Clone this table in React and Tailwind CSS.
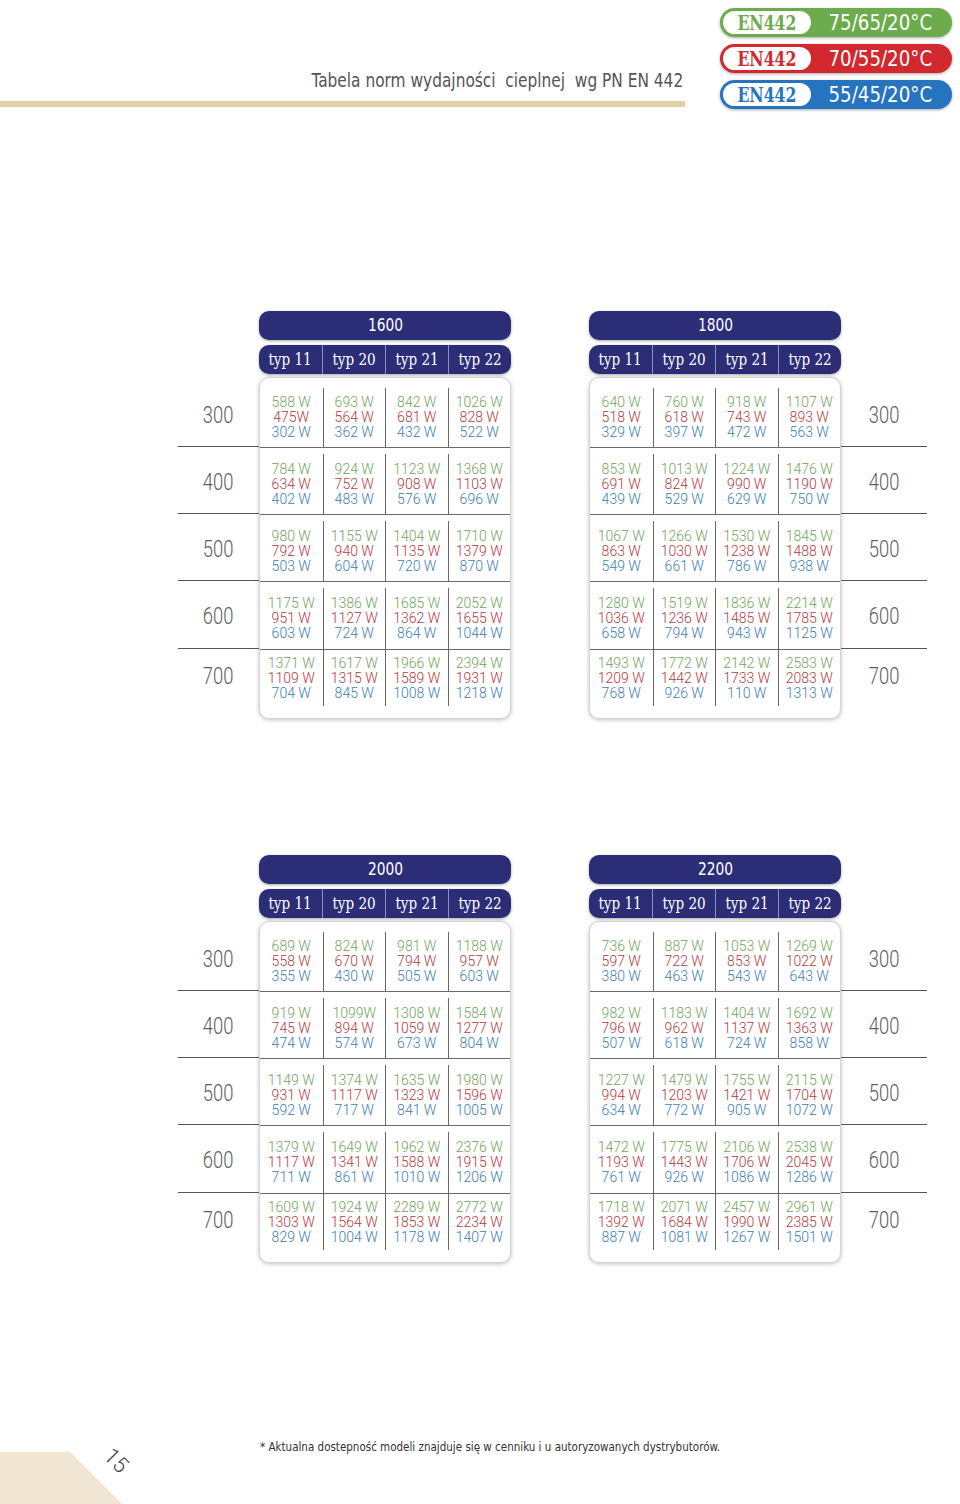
import React from 'react';

const narrow = { fontFamily: '"Liberation Sans Narrow", "DejaVu Sans Condensed", "Liberation Sans", sans-serif' };
const slab = { fontFamily: '"DejaVu Serif Condensed", "DejaVu Serif", serif' };
const thin = { fontFamily: 'Roboto, "Liberation Sans", sans-serif' };

const w = (v) => (typeof v === 'number' ? `${v} W` : v);

const t1600 = [
  [[588, '475W', 302], [693, 564, 362], [842, 681, 432], [1026, 828, 522]],
  [[784, 634, 402], [924, 752, 483], [1123, 908, 576], [1368, 1103, 696]],
  [[980, 792, 503], [1155, 940, 604], [1404, 1135, 720], [1710, 1379, 870]],
  [[1175, 951, 603], [1386, 1127, 724], [1685, 1362, 864], [2052, 1655, 1044]],
  [[1371, 1109, 704], [1617, 1315, 845], [1966, 1589, 1008], [2394, 1931, 1218]],
];
const t1800 = [
  [[640, 518, 329], [760, 618, 397], [918, 743, 472], [1107, 893, 563]],
  [[853, 691, 439], [1013, 824, 529], [1224, 990, 629], [1476, 1190, 750]],
  [[1067, 863, 549], [1266, 1030, 661], [1530, 1238, 786], [1845, 1488, 938]],
  [[1280, 1036, 658], [1519, 1236, 794], [1836, 1485, 943], [2214, 1785, 1125]],
  [[1493, 1209, 768], [1772, 1442, 926], [2142, 1733, 110], [2583, 2083, 1313]],
];
const t2000 = [
  [[689, 558, 355], [824, 670, 430], [981, 794, 505], [1188, 957, 603]],
  [[919, 745, 474], ['1099W', 894, 574], [1308, 1059, 673], [1584, 1277, 804]],
  [[1149, 931, 592], [1374, 1117, 717], [1635, 1323, 841], [1980, 1596, 1005]],
  [[1379, 1117, 711], [1649, 1341, 861], [1962, 1588, 1010], [2376, 1915, 1206]],
  [[1609, 1303, 829], [1924, 1564, 1004], [2289, 1853, 1178], [2772, 2234, 1407]],
];
const t2200 = [
  [[736, 597, 380], [887, 722, 463], [1053, 853, 543], [1269, 1022, 643]],
  [[982, 796, 507], [1183, 962, 618], [1404, 1137, 724], [1692, 1363, 858]],
  [[1227, 994, 634], [1479, 1203, 772], [1755, 1421, 905], [2115, 1704, 1072]],
  [[1472, 1193, 761], [1775, 1443, 926], [2106, 1706, 1086], [2538, 2045, 1286]],
  [[1718, 1392, 887], [2071, 1684, 1081], ['2457  W', 1990, 1267], [2961, 2385, 1501]],
];

const heights = ['300', '400', '500', '600', '700'];
const rowCls = [
  'h-[70px] pt-[10px] border-b',
  'h-[67px] pt-[6px] border-b',
  'h-[67px] pt-[6px] border-b',
  'h-[68px] pt-[6px] border-b',
  'h-[68px] pb-[12px]',
];

const badges = [
  { label: '75/65/20°C', bg: 'bg-[#6cac4c]', text: 'text-[#6cac4c]' },
  { label: '70/55/20°C', bg: 'bg-[#d2282e]', text: 'text-[#d2282e]' },
  { label: '55/45/20°C', bg: 'bg-[#2674c0]', text: 'text-[#2674c0]' },
];

function Labels({ width }) {
  return (
    <div className={`${width} flex flex-col`}>
      <div className="h-[66px]" />
      {heights.map((h, i) => (
        <div
          key={h}
          className={`${rowCls[i]} border-[#555] flex items-center justify-center text-[23px] font-light text-[#5e5e5e]`}
          style={thin}
        >
          <span className="block scale-x-[0.8]">{h}</span>
        </div>
      ))}
    </div>
  );
}

function Table({ title, rows }) {
  return (
    <div className="w-[252px] flex flex-col">
      <div
        className="h-[29px] rounded-[10px] bg-[#2b2d77] text-white text-[17px] flex items-center justify-center shadow-[0_1px_3px_rgba(0,0,0,0.35)]"
        style={narrow}
      >
        <span className="block scale-x-[0.9]">{title}</span>
      </div>
      <div className="mt-[5px] h-[29px] rounded-[10px] bg-[#2b2d77] text-white text-[16px] grid grid-cols-4 shadow-[0_1px_3px_rgba(0,0,0,0.35)]" style={slab}>
        {['typ 11', 'typ 20', 'typ 21', 'typ 22'].map((t, i) => (
          <div key={t} className={`flex items-center justify-center ${i > 0 ? 'border-l border-[#8d8fc2]' : ''}`}>
            <span className="block scale-x-[0.94]">{t}</span>
          </div>
        ))}
      </div>
      <div className="mt-[3px] rounded-[10px] border border-[#d4d4d4] bg-white shadow-[0_1px_4px_rgba(0,0,0,0.25)] overflow-hidden">
        {rows.map((row, r) => (
          <div key={r} className={`${rowCls[r]} border-[#6a6a6a] grid grid-cols-4`}>
            {row.map((cell, c) => (
              <div
                key={c}
                className={`flex flex-col items-center justify-center text-[14px] leading-[15px] font-light ${c > 0 ? 'border-l border-[#6a6a6a]' : ''}`}
                style={thin}
              >
                <span className="text-[#72a55e]">{w(cell[0])}</span>
                <span className="text-[#b83a40]">{w(cell[1])}</span>
                <span className="text-[#3d80b3]">{w(cell[2])}</span>
              </div>
            ))}
          </div>
        ))}
      </div>
    </div>
  );
}

function Section({ left, right, className = '' }) {
  return (
    <section className={`flex pl-[178px] ${className}`}>
      <Labels width="w-[81px]" />
      <Table title={left.title} rows={left.rows} />
      <div className="w-[78px]" />
      <Table title={right.title} rows={right.rows} />
      <Labels width="w-[86px]" />
    </section>
  );
}

export default function App() {
  return (
    <div className="relative w-[960px] h-[1504px] bg-white overflow-hidden">
      <header className="flex h-[311px] items-start">
        <div className="w-[685px] pt-[68px]">
          <div className="text-right pr-[2px] text-[19px] leading-[24px] text-[#555] origin-right scale-x-[0.9]" style={narrow}>
            Tabela norm wydajności&nbsp; cieplnej&nbsp; wg PN EN 442
          </div>
          <div className="mt-[9px] h-[6px] bg-[#e0cfa6]" />
        </div>
        <div className="ml-[35px] pt-[8px] w-[232px] flex flex-col gap-[7px]">
          {badges.map((b) => (
            <div key={b.label} className={`flex h-[29px] rounded-full ${b.bg} p-[3px] shadow-[0_1px_3px_rgba(0,0,0,0.35)]`}>
              <div className={`w-[88px] rounded-full bg-white flex items-center justify-center text-[20px] font-bold ${b.text}`} style={slab}>
                <span className="block scale-x-[0.87]">EN442</span>
              </div>
              <div className="flex-1 flex items-center justify-center text-white text-[22px]" style={narrow}>
                <span className="block scale-x-[0.92]">{b.label}</span>
              </div>
            </div>
          ))}
        </div>
      </header>

      <Section left={{ title: '1600', rows: t1600 }} right={{ title: '1800', rows: t1800 }} />
      <Section className="mt-[136px]" left={{ title: '2000', rows: t2000 }} right={{ title: '2200', rows: t2200 }} />

      <p className="mt-[176px] ml-[260px] text-[13px] leading-[16px] text-[#333] origin-left scale-x-[0.885]" style={narrow}>
        * Aktualna dostepność modeli znajduje się w cenniku i u autoryzowanych dystrybutorów.
      </p>

      <div className="absolute left-0 bottom-0 w-[122px] h-[52px] bg-[#f0e6d3] [clip-path:polygon(0_0,70px_0,100%_100%,0_100%)]" />
      <div className="absolute left-[104px] top-[1444px] rotate-45 text-[22px] font-light text-[#444]" style={thin}>
        15
      </div>
    </div>
  );
}
